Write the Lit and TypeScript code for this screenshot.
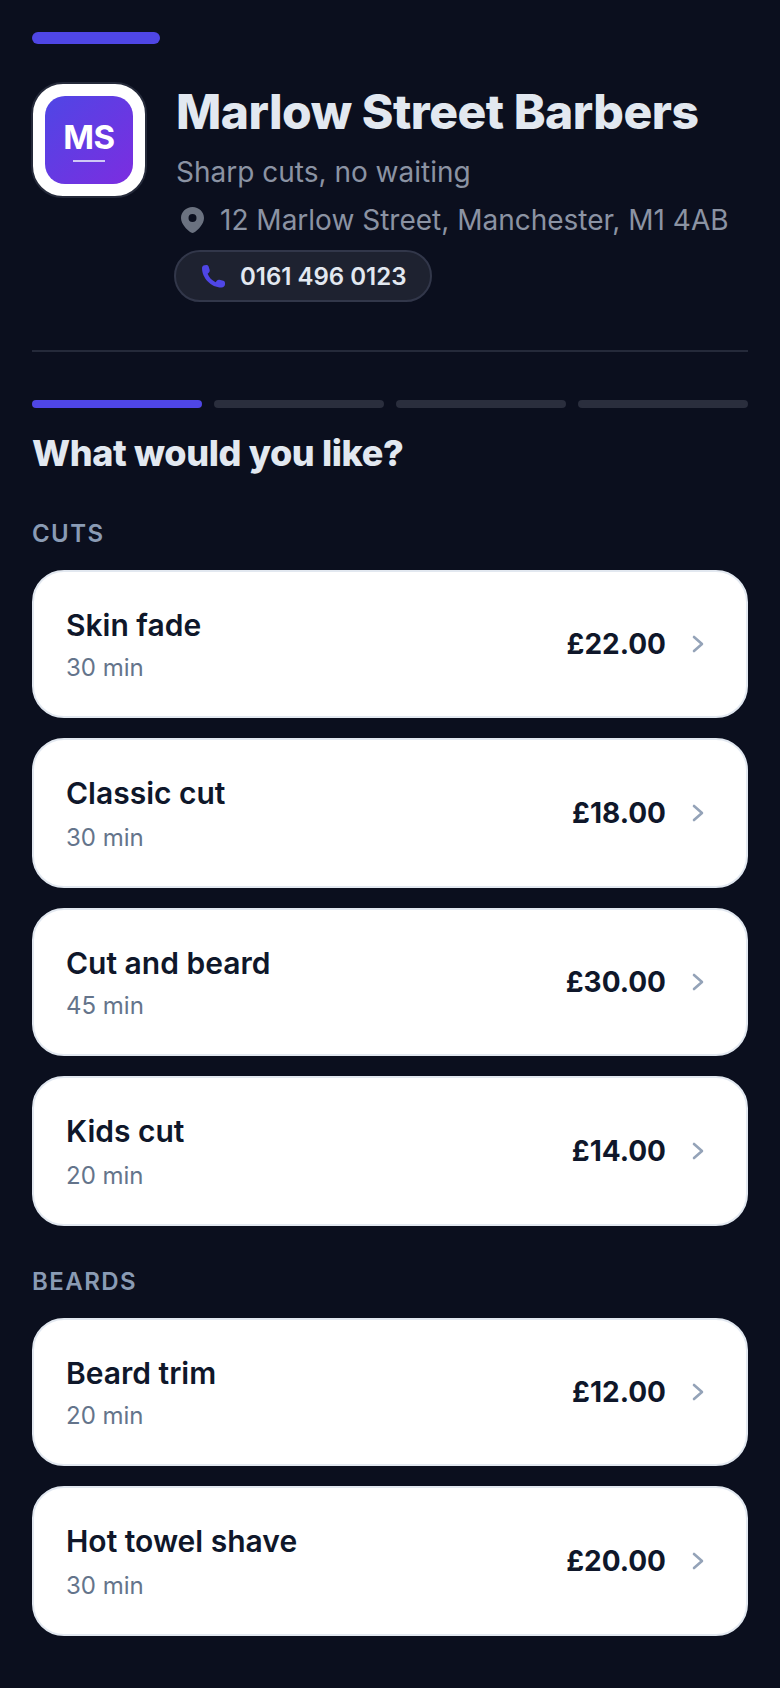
import { LitElement, html, css } from "lit";
import { customElement } from "lit/decorators.js";

const groups = [
  { label: "CUTS", items: [["Skin fade", "30 min", "£22.00"], ["Classic cut", "30 min", "£18.00"], ["Cut and beard", "45 min", "£30.00"], ["Kids cut", "20 min", "£14.00"]] },
  { label: "BEARDS", items: [["Beard trim", "20 min", "£12.00"], ["Hot towel shave", "30 min", "£20.00"]] },
];

@customElement("app-root")
export class AppRoot extends LitElement {
  static styles = css`
    :host { display: block; min-height: 1688px; background: #0b0f1e; font-family: Inter, "Liberation Sans", sans-serif; padding: 32px; box-sizing: border-box; }
    .topbar { width: 128px; height: 12px; border-radius: 6px; background: #4f46e5; margin-bottom: 38px; }
    .head { display: flex; gap: 29px; align-items: flex-start; padding-bottom: 48px; border-bottom: 2px solid #252a3a; margin-bottom: 48px; }
    .logo { width: 116px; height: 116px; box-sizing: border-box; flex: none; margin-left: -1px; background: #fff; border: 2px solid #252a3a; border-radius: 32px; display: flex; align-items: center; justify-content: center; }
    .mark { width: 88px; height: 88px; border-radius: 20px; background: linear-gradient(135deg, #4f46e5, #7c2de0); display: flex; flex-direction: column; align-items: center; justify-content: center; color: #fff; font-weight: 700; font-size: 33px; line-height: 37px; letter-spacing: -0.5px; }
    .mark i { display: block; width: 32px; height: 2px; background: #cfc8f5; margin-top: 4px; }
    .info { min-width: 0; flex: 1; }
    h1 { margin: 2px 0 0; font-size: 48px; line-height: 56px; font-weight: 800; letter-spacing: -0.48px; color: #e2e8f0; white-space: nowrap; }
    .tag { font-size: 28px; line-height: 40px; color: #8b93a3; margin-top: 12px; }
    .addr { display: flex; align-items: center; gap: 16px; font-size: 28px; line-height: 40px; color: #8b93a3; white-space: nowrap; margin-top: 8px; }
    .addr svg { width: 23px; height: 26px; flex: none; margin-left: 5px; }
    .phone { display: inline-flex; align-items: center; gap: 15px; height: 52px; box-sizing: border-box; padding: 0 24px 0 26px; margin-top: 10px; margin-left: -2px; border-radius: 26px; background: #1e2230; border: 2px solid #32374a; color: #e2e8f0; font-size: 24px; font-weight: 600; }
    .phone svg { width: 23px; height: 23px; flex: none; }
    .steps { display: flex; gap: 12px; margin-bottom: 23px; }
    .steps span { flex: 1; height: 8px; border-radius: 4px; background: #2a2e3d; }
    .steps span.on { background: #4f46e5; }
    h2 { margin: 0 0 43px; font-size: 36px; line-height: 44px; font-weight: 800; letter-spacing: -0.36px; color: #e2e8f0; }
    h3 { margin: 0 0 20px; font-size: 24px; line-height: 32px; font-weight: 600; letter-spacing: 1.44px; color: #8a9bb4; }
    .list { display: flex; flex-direction: column; gap: 20px; margin-bottom: 40px; }
    .card { display: flex; align-items: center; box-sizing: border-box; padding: 32px 36px 32px 32px; background: #fff; border: 2px solid #e2e8f0; border-radius: 32px; }
    .txt { flex: 1; }
    .name { font-size: 30px; line-height: 40px; font-weight: 600; color: #0f172a; margin-top: 1px; }
    .meta { font-size: 24px; line-height: 34px; margin: 6px 0 -1px; color: #64748b; }
    .card:nth-child(even) .meta { margin-top: 8px; }
    .price { font-size: 28px; font-weight: 700; color: #0f172a; }
    .chev { width: 24px; height: 24px; margin-left: 20px; flex: none; }
  `;
  render() {
    return html`
      <div class="topbar"></div>
      <div class="head">
        <div class="logo"><div class="mark">MS<i></i></div></div>
        <div class="info">
          <h1>Marlow Street Barbers</h1>
          <div class="tag">Sharp cuts, no waiting</div>
          <div class="addr">
            <svg viewBox="0 0 23 26" fill="#6b7280"><path fill-rule="evenodd" d="M11.5 0C5 0 0 5 0 11c0 6 6 12 10 14.5 1 .6 2 .6 3 0C17 23 23 17 23 11 23 5 18 0 11.5 0zm0 7a4 4 0 1 1 0 8 4 4 0 0 1 0-8z"/></svg>
            12 Marlow Street, Manchester, M1 4AB
          </div>
          <div class="phone">
            <svg viewBox="0 0 23 23" fill="#4f46e5"><path d="M2.5.3C1 .6 0 1.6 0 3.2.2 13 9 22.5 19.5 22.5c2 0 3.5-1.5 3.5-3V18c0-1.2-.7-2-1.7-2.3l-3.8-.9c-1-.2-1.9.1-2.5.8l-1.4 1.6C9.8 15.4 7 12.4 5.600 8.800L7 7.400c.7-.7.9-1.500.7-2.400L6.600 1.600C6.300.6 5.500 0 4.400 0z"/></svg>
            0161 496 0123
          </div>
        </div>
      </div>
      <div class="steps"><span class="on"></span><span></span><span></span><span></span></div>
      <h2>What would you like?</h2>
      ${groups.map(g => html`
        <h3>${g.label}</h3>
        <div class="list">
          ${g.items.map(([n, m, p]) => html`
            <div class="card">
              <div class="txt"><div class="name">${n}</div><div class="meta">${m}</div></div>
              <div class="price">${p}</div>
              <svg class="chev" viewBox="0 0 24 24" fill="none" stroke="#94a3b8" stroke-width="2.6" stroke-linecap="round" stroke-linejoin="round"><path d="M8 5l8 7-8 7"/></svg>
            </div>`)}
        </div>`)}
    `;
  }
}
